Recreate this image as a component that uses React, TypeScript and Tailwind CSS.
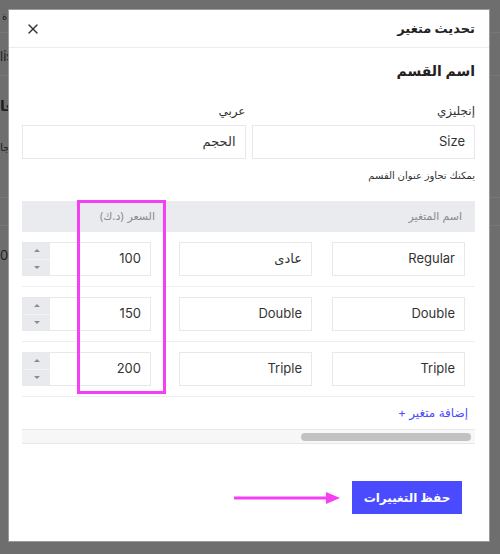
import { X } from 'lucide-react';

const rows = [
  { en: 'Regular', ar: 'عادى', price: '100' },
  { en: 'Double', ar: 'Double', price: '150' },
  { en: 'Triple', ar: 'Triple', price: '200' },
];

function Field({ value, className = '' }: { value: string; className?: string }) {
  return (
    <div
      className={`flex h-[34px] items-center border border-[#e7e8ec] bg-white px-[9px] text-[13px] text-[#333] ${className}`}
    >
      {value}
    </div>
  );
}

function PriceField({ value }: { value: string }) {
  return (
    <div className="flex h-[34px] w-[129px] border border-[#e7e8ec] bg-white">
      <div className="flex flex-1 items-center px-[9px] text-[13px] text-[#333]">
        {value}
      </div>
      <div className="flex w-[27px] flex-col bg-[#e9eaee]">
        <div className="flex flex-1 items-center justify-center border-b border-[#f3f3f5]">
          <div className="h-0 w-0 border-r-[3px] border-b-[3px] border-l-[3px] border-r-transparent border-b-[#8a8c94] border-l-transparent" />
        </div>
        <div className="flex flex-1 items-center justify-center">
          <div className="h-0 w-0 border-t-[3px] border-r-[3px] border-l-[3px] border-t-[#8a8c94] border-r-transparent border-l-transparent" />
        </div>
      </div>
    </div>
  );
}

export default function App() {
  return (
    <div className="relative h-[554px] w-[500px] overflow-hidden bg-[#6e6e6e] font-['Inter','DejaVu_Sans',sans-serif]">
      {/* page behind the overlay */}
      <div className="text-[#1e1e1e]">
        <div className="flex h-[33px] items-center border-b border-[#777] pl-[2px] text-[10px]">ة.</div>
        <div className="flex h-[43px] items-center border-b border-[#777] pt-[6px] text-[13px]">lis</div>
        <div className="flex h-[59px] items-center text-[14px] font-bold">قا</div>
        <div className="flex h-[63px] items-start border-b border-[#777] pt-[4px] text-[11px]">جا</div>
        <div className="h-[28px] border-b border-[#777]" />
        <div className="flex h-[60px] items-center text-[13px]">00</div>
      </div>

      {/* modal */}
      <div className="absolute inset-0 flex justify-start pt-[10px] pl-[9px]">
        <div
          dir="rtl"
          className="h-[531px] w-[480px] bg-white shadow-[0_0_0_1px_#9a9a9a]"
        >
          <div className="flex h-[38px] items-center justify-between border-b border-[#ececec] pr-[14px] pl-[16px]">
            <h2 className="text-[13px] font-semibold text-[#222]">تحديث متغير</h2>
            <X size={16} strokeWidth={2} className="text-[#333]" />
          </div>

          <div className="pt-[13px] pr-[14px] pl-[13px]">
            <h3 className="h-[20px] text-[14px] leading-[20px] font-semibold text-[#222]">
              اسم القسم
            </h3>

            <div className="mt-[22px] flex gap-[6px]">
              <div className="flex-1">
                <div className="mb-[6px] h-[16px] text-[12px] leading-[16px] text-[#333]">إنجليزي</div>
                <Field value="Size" />
              </div>
              <div className="flex-1">
                <div className="mb-[6px] h-[16px] text-[12px] leading-[16px] text-[#333]">عربي</div>
                <Field value="الحجم" />
              </div>
            </div>

            <p className="mt-[9px] h-[14px] text-[10px] leading-[14px] text-[#333]">
              يمكنك تجاوز عنوان القسم
            </p>

            <div className="relative mt-[19px]">
              <div className="flex h-[31px] items-center bg-[#eaebef] text-[11px] text-[#8a8a8a]">
                <div className="w-[296px] pr-[13px]">اسم المتغير</div>
                <div className="pr-[24px]">السعر (د.ك)</div>
              </div>

              {rows.map((r) => (
                <div
                  key={r.price}
                  className="flex border-b border-[#eceef1] pt-[10px] pr-[10px] pb-[10px]"
                >
                  <Field value={r.en} className="w-[133px]" />
                  <Field value={r.ar} className="mr-[20px] w-[133px]" />
                  <div className="mr-[28px]">
                    <PriceField value={r.price} />
                  </div>
                </div>
              ))}

              <div className="flex h-[32px] items-center pr-[7px] text-[12px] text-[#4a4aff]">
                إضافة متغير +
              </div>

              <div className="flex h-[15px] items-center border-y border-[#e8e8e8] bg-[#f7f7f7] pr-[4px]">
                <div className="h-[8px] w-[170px] rounded-full bg-[#c2c2c2]" />
              </div>

              <div className="pointer-events-none absolute top-[-1px] left-[55px] h-[194px] w-[89px] border-[3px] border-[#f43ff4]" />
            </div>

            <div className="mt-[37px] flex items-center gap-[12px] pr-[13px]">
              <button className="h-[33px] w-[110px] bg-[#4a4aff] text-[12px] font-bold text-white">
                حفظ التغييرات
              </button>
              <svg width="106" height="14" viewBox="0 0 106 14" className="block">
                <line x1="94" y1="7" x2="0" y2="7" stroke="#f43ff4" strokeWidth="3" />
                <polygon points="92,1 106,7 92,13" fill="#f43ff4" />
              </svg>
            </div>
          </div>
        </div>
      </div>
    </div>
  );
}
